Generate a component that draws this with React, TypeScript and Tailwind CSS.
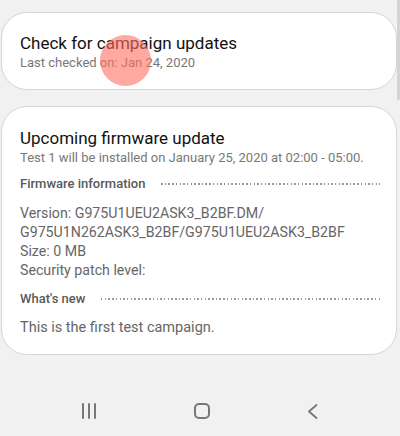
function Dotted({ label, top }: { label: string; top: string }) {
	return (
		<div className={'flex flex-row items-center gap-4 ' + top}>
			<span className="text-[13px] leading-[18px] font-medium text-[#595959]">
				{label}
			</span>
			<div className="flex-1 h-[1.5px] mr-[-2px] bg-[repeating-linear-gradient(90deg,#9a9a9a_0_1.5px,transparent_1.5px_3.7px)]" />
		</div>
	);
}

export default function App() {
	return (
		<div
			className="w-[400px] h-[436px] bg-[#f1f1f1] flex flex-col relative overflow-hidden"
			style={{ fontFamily: 'Roboto, "Noto Sans", sans-serif' }}
		>
			<div className="absolute right-0 top-0 w-[3px] h-[100px] bg-[#d4d4d4]" />
			<div className="flex flex-col gap-[16px] pt-[12px] pl-[1px] pr-[3px]">
				<div className="bg-white border border-[#d6d6d6] rounded-[26px] h-[78px] px-[18px] pt-[19px] relative">
					<div className="text-[17px] text-[#111] leading-[22px]">
						Check for campaign updates
					</div>
					<div className="text-[13px] text-[#787878] leading-[17px]">
						Last checked on: Jan 24, 2020
					</div>
					<div className="absolute left-[98px] top-[22px] w-[51px] h-[51px] rounded-full bg-[#ff6f63] opacity-60" />
				</div>
				<div className="bg-white border border-[#d6d6d6] rounded-[26px] h-[249px] px-[18px] pt-[20px]">
					<div className="text-[17px] text-[#111] leading-[22px]">
						Upcoming firmware update
					</div>
					<div className="text-[13px] text-[#787878] leading-[17px]">
						Test 1 will be installed on January 25, 2020 at 02:00 - 05:00.
					</div>
					<Dotted label="Firmware information" top="mt-[9px]" />
					<div className="text-[14.2px] text-[#666] leading-[19px] mt-[11px]">
						<div>Version: G975U1UEU2ASK3_B2BF.DM/</div>
						<div>G975U1N262ASK3_B2BF/G975U1UEU2ASK3_B2BF</div>
						<div>Size: 0 MB</div>
						<div>Security patch level:</div>
					</div>
					<Dotted label="What's new" top="mt-[10px]" />
					<div className="text-[14.5px] text-[#666] leading-[19px] mt-[10px]">
						This is the first test campaign.
					</div>
				</div>
			</div>
			<div className="mt-auto h-[48px] flex flex-row items-center justify-between pl-[81px] pr-[82px] pb-[2px]">
				<svg width="16" height="16" viewBox="0 0 16 16" className="text-[#777]">
					<rect x="1" y="0" width="2" height="16" rx="1" fill="currentColor" />
					<rect x="7" y="0" width="2" height="16" rx="1" fill="currentColor" />
					<rect x="13" y="0" width="2" height="16" rx="1" fill="currentColor" />
				</svg>
				<div className="w-[16px] h-[16px] border-2 border-[#777] rounded-[5px]" />
				<svg width="11" height="15" viewBox="0 0 11 15" fill="none" className="text-[#777]">
					<polyline points="9.5,1 2,7.5 9.5,14" stroke="currentColor" strokeWidth="1.8" strokeLinecap="round" strokeLinejoin="round" />
				</svg>
			</div>
		</div>
	);
}
